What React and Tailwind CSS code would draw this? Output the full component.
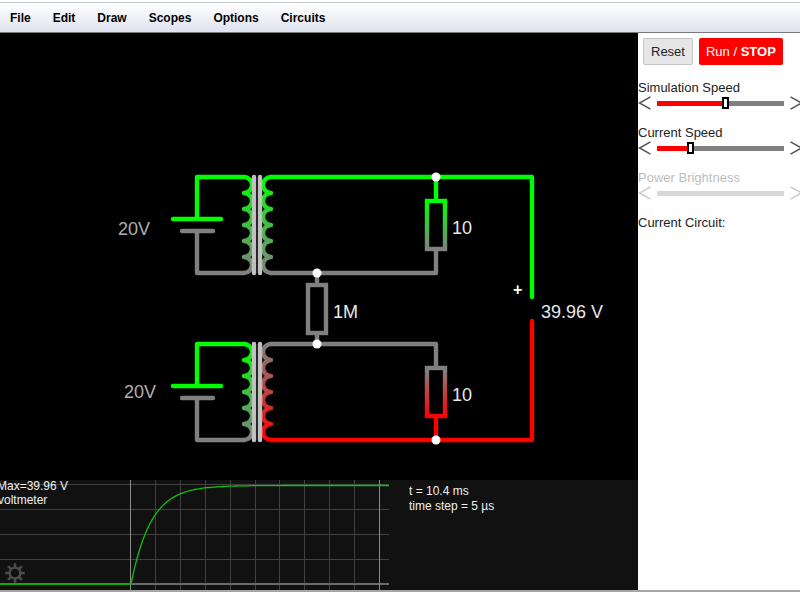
import React, { useState } from 'react';

const MENU_ITEMS = ['File', 'Edit', 'Draw', 'Scopes', 'Options', 'Circuits'];

const GREEN = '#00ff00';
const GRAY = '#808080';
const RED = '#ff0000';

const MenuBar = () => (
  <nav className="flex h-[31px] items-center gap-[22px] border-t border-b border-t-[#c5cdd3] border-b-[#77797e] bg-linear-to-b from-white to-[#dfe3ef] px-2.5">
    {MENU_ITEMS.map((item) => (
      <button key={item} type="button" className="text-xs font-bold text-black">
        {item}
      </button>
    ))}
  </nav>
);

// Six half turns, 16px each. side is 1 when the turns bulge right, 0 for left.
const coilPath = (x, top, side) => {
  let d = `M${x} ${top}`;
  for (let i = 1; i <= 6; i++) {
    d += ` A8 8 0 0 ${side} ${x} ${top + i * 16}`;
  }
  return d;
};

const Resistor = ({ x, y, stroke, label }) => (
  <>
    <rect x={x - 9} y={y} width="18" height="48" stroke={stroke} />
    <text x={x + 16} y={y + 33} fill="#e8e8e8" fontSize="18">
      {label}
    </text>
  </>
);

const Source = ({ top, labelX, labelY }) => (
  <>
    <path d={`M244 ${top} H197 V${top + 42} M173 ${top + 42} H221`} stroke={GREEN} />
    <path d={`M182 ${top + 54} H213 M197 ${top + 54} V${top + 96} H244`} stroke={GRAY} />
    <text x={labelX} y={labelY} fill="#b0b0b0" fontSize="18">
      20V
    </text>
  </>
);

const Transformer = ({ top, primary, secondary }) => (
  <>
    <path d={coilPath(244, top, 1)} stroke={primary} />
    <path d={coilPath(271, top, 0)} stroke={secondary} />
    <path d={`M254 ${top} V${top + 96} M260 ${top} V${top + 96}`} stroke="#c0c0c0" />
  </>
);

const Fade = ({ id, y1, y2, from, to }) => (
  <linearGradient id={id} gradientUnits="userSpaceOnUse" x1="0" x2="0" y1={y1} y2={y2}>
    <stop offset="0" stopColor={from} />
    <stop offset="1" stopColor={to} />
  </linearGradient>
);

const Circuit = () => (
  <svg
    viewBox="0 33 638 447"
    className="block w-full bg-black"
    fill="none"
    strokeWidth="4.4"
    strokeLinecap="round"
    strokeLinejoin="round"
    role="img"
    aria-label="Circuit"
  >
    <defs>
      <Fade id="upper" y1="177" y2="273" from={GREEN} to={GRAY} />
      <Fade id="lower" y1="344" y2="440" from={GREEN} to={GRAY} />
      <Fade id="lowerRed" y1="344" y2="440" from={GRAY} to={RED} />
      <Fade id="load" y1="203" y2="249" from={GREEN} to={GRAY} />
      <Fade id="loadRed" y1="370" y2="416" from={GRAY} to={RED} />
    </defs>

    <Source top={177} labelX={118} labelY={235} />
    <Source top={344} labelX={124} labelY={398} />

    <Transformer top={177} primary="url(#upper)" secondary="url(#upper)" />
    <Transformer top={344} primary="url(#lower)" secondary="url(#lowerRed)" />

    {/* Wires */}
    <path d="M271 273 H436 V250 M317 273 V282 M317 334 V344 M271 344 H436 V366" stroke={GRAY} />
    <path d="M271 177 H532 V297 M436 177 V200" stroke={GREEN} />
    <path d="M271 440 H532 V321 M436 440 V418" stroke={RED} />

    <g strokeLinejoin="miter">
      <Resistor x={436} y={201} stroke="url(#load)" label="10" />
      <Resistor x={317} y={285} stroke={GRAY} label="1M" />
      <Resistor x={436} y={368} stroke="url(#loadRed)" label="10" />
    </g>

    <g fill="#fff">
      <circle cx="436" cy="177" r="4.5" />
      <circle cx="317" cy="273" r="4.5" />
      <circle cx="317" cy="344" r="4.5" />
      <circle cx="436" cy="440" r="4.5" />
    </g>

    <text x="513" y="295" fill="#fff" fontSize="16" fontWeight="bold">+</text>
    <text x="541" y="318" fill="#e8e8e8" fontSize="18">39.96 V</text>
  </svg>
);

// Step response: flat until x=131, then an exponential rise to the maximum
const tracePoints = () => {
  const points = ['0,104', '131,104'];
  for (let dx = 2; dx <= 258; dx += 2) {
    const y = 104 - 98.5 * (1 - Math.exp(-dx / 20));
    points.push(`${131 + dx},${y.toFixed(1)}`);
  }
  return points.join(' ');
};

const GearIcon = () => (
  <svg viewBox="0 0 20 20" className="size-5" fill="none" stroke="#4c4c4c">
    <circle cx="10" cy="10" r="5.4" strokeWidth="2.4" />
    {[0, 45, 90, 135, 180, 225, 270, 315].map((angle) => (
      <path key={angle} d="M10 4.5 V0.2" strokeWidth="2.6" transform={`rotate(${angle} 10 10)`} />
    ))}
  </svg>
);

const Scope = () => (
  <div className="relative bg-[#111]">
    <svg viewBox="0 0 638 110" className="block w-full" fill="none" role="img" aria-label="Scope">
      <g stroke="#404040">
        {[4.5, 29.5, 54.5, 79.5].map((y) => (
          <path key={y} d={`M0 ${y} H389`} />
        ))}
        {[155.5, 180.5, 205.5, 230.5, 255.5, 279.5, 304.5, 329.5, 354.5].map((x) => (
          <path key={x} d={`M${x} 0 V110`} />
        ))}
      </g>
      <path d="M0 104 H389" stroke="#6a6a6a" strokeWidth="2" />
      <path d="M130.5 0 V110 M379.5 0 V110" stroke="#8c8c8c" />
      <path d="M0 104 H131" stroke="#1a6a1a" strokeWidth="2" />
      <polyline points={tracePoints()} stroke="#10c010" strokeWidth="1.3" />
      <g fill="#f0f0f0" fontSize="12">
        <text x="-3" y="10">Max=39.96 V</text>
        <text x="-2" y="24">voltmeter</text>
        <text x="409" y="15">t = 10.4 ms</text>
        <text x="409" y="30">time step = 5 µs</text>
      </g>
    </svg>
    <button type="button" aria-label="Scope settings" className="absolute bottom-[7px] left-[5px]">
      <GearIcon />
    </button>
  </div>
);

const Slider = ({ id, label, initial, disabled }) => {
  const [value, setValue] = useState(initial);
  const fill = disabled ? 0 : value;
  const step = (amount) => setValue((v) => Math.min(100, Math.max(0, v + amount)));

  return (
    <div className={disabled ? 'opacity-30' : ''}>
      <label htmlFor={id} className="block h-4 text-[13px] leading-4">
        {label}
      </label>
      <div className="flex h-3.5 w-[164px] items-center gap-1.5">
        <button type="button" aria-label={`Decrease ${label}`} disabled={disabled} onClick={() => step(-1)}>
          <svg viewBox="0 0 13 14" className="h-3.5 w-[13px]" fill="none" stroke="#555" strokeWidth="1.5">
            <path d="M12.5 0.8 L1.5 7 L12.5 13.2" />
          </svg>
        </button>
        <input
          id={id}
          type="range"
          min="0"
          max="100"
          value={value}
          disabled={disabled}
          onChange={(e) => setValue(Number(e.target.value))}
          className={`h-3 w-[127px] appearance-none bg-[length:100%_5px] bg-center bg-no-repeat [&::-webkit-slider-thumb]:h-3 [&::-webkit-slider-thumb]:w-[7px] [&::-webkit-slider-thumb]:appearance-none [&::-webkit-slider-thumb]:border-2 [&::-webkit-slider-thumb]:border-black [&::-webkit-slider-thumb]:bg-white ${disabled ? '[&::-webkit-slider-thumb]:opacity-0' : ''}`}
          style={{ backgroundImage: `linear-gradient(to right, #ff0000 ${fill}%, #808080 ${fill}%)` }}
        />
        <button type="button" aria-label={`Increase ${label}`} disabled={disabled} onClick={() => step(1)}>
          <svg viewBox="0 0 13 14" className="h-3.5 w-[13px]" fill="none" stroke="#555" strokeWidth="1.5">
            <path d="M0.5 0.8 L11.5 7 L0.5 13.2" />
          </svg>
        </button>
      </div>
    </div>
  );
};

const Sidebar = () => (
  <aside className="w-[162px] shrink-0 overflow-hidden bg-white text-[#222]">
    <div className="flex gap-1.5 px-[5px] pt-[5px]">
      <button type="button" className="h-[27px] rounded-xs border border-[#c4c4c4] bg-[#e6e6e6] px-[7px] text-[13px] leading-4 whitespace-nowrap">
        Reset
      </button>
      <button type="button" className="h-[27px] rounded-xs bg-[#ff0000] px-[7px] text-[13px] leading-4 whitespace-nowrap text-white">
        Run / <strong>STOP</strong>
      </button>
    </div>
    <div className="mt-[15px] flex flex-col gap-[15px]">
      <Slider id="simulation-speed" label="Simulation Speed" initial={54} />
      <Slider id="current-speed" label="Current Speed" initial={25} />
      <Slider id="power-brightness" label="Power Brightness" initial={50} disabled />
      <p className="text-[13px] leading-4">Current Circuit:</p>
    </div>
  </aside>
);

const App = () => (
  <div className="overflow-hidden border-b-2 border-[#a6a6a6] bg-white pt-0.5 font-['Liberation_Sans',Arial,sans-serif]">
    <MenuBar />
    <div className="flex">
      <main className="min-w-0 flex-1">
        <Circuit />
        <Scope />
      </main>
      <Sidebar />
    </div>
  </div>
);

export default App;
